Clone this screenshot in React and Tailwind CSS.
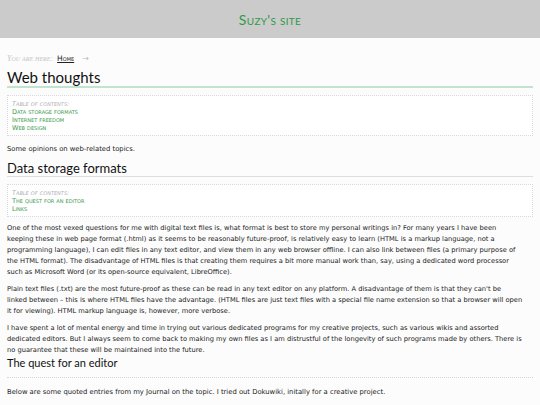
import React from 'react';

// Table of contents box
const Toc = ({ items }) => (
  <div className="border border-dotted border-[#d8d8d8] bg-white px-[4px] pt-[4px] pb-[3px] leading-[8px] text-[6.5px] [font-variant:small-caps]">
    <div className="italic text-[#b0b0b0]">Table of contents:</div>
    {items.map((item) => (
      <div key={item} className="text-[#3a9a4e]">{item}</div>
    ))}
  </div>
);

export default function App() {
  return (
    <div className="min-h-[405px] bg-[#fcfcfc] font-['DejaVu_Sans',sans-serif] text-[#222]">
      <div className="h-[38px] bg-[#cbcbcb] flex items-center justify-center">
        <h1 className="font-['Lato',sans-serif] text-[14px] text-[#2e9a48] [font-variant:small-caps] tracking-[0.3px]">Suzy's site</h1>
      </div>

      <div className="px-[7px]">
        <div className="mt-[17px] flex items-center gap-[4px] leading-[8px] [font-variant:small-caps]">
          <span className="italic text-[#c4c4c4] font-['Liberation_Serif',serif] text-[8px]">You are here:</span>
          <span className="text-[#222] underline text-[7.5px]">Home</span>
          <span className="text-[#bbb] text-[8px] ml-[4px]">→</span>
        </div>

        <h2 className="mt-[5px] font-['Lato',sans-serif] text-[15px] leading-[18px] text-[#111] border-b-2 border-[#c3e3cc]">Web thoughts</h2>

        <div className="mt-[7px]">
          <Toc items={['Data storage formats', 'Internet freedom', 'Web design']} />
        </div>

        <p className="mt-[8px] text-[6.8px] leading-[11px]">Some opinions on web-related topics.</p>

        <h3 className="mt-[6px] font-['Lato',sans-serif] text-[13px] leading-[14px] text-[#111] border-b border-[#dedede] pb-[1px]">Data storage formats</h3>

        <div className="mt-[7px]">
          <Toc items={['The quest for an editor', 'Links']} />
        </div>

        <div className="mt-[6px] text-[6.7px] leading-[11px] text-[#222] whitespace-nowrap flex flex-col gap-[6px]">
          <p>
            One of the most vexed questions for me with digital text files is, what format is best to store my personal writings in? For many years I have been<br />
            keeping these in web page format (.html) as it seems to be reasonably future-proof, is relatively easy to learn (HTML is a markup language, not a<br />
            programming language), I can edit files in any text editor, and view them in any web browser offline. I can also link between files (a primary purpose of<br />
            the HTML format). The disadvantage of HTML files is that creating them requires a bit more manual work than, say, using a dedicated word processor<br />
            such as Microsoft Word (or its open-source equivalent, LibreOffice).
          </p>
          <p>
            Plain text files (.txt) are the most future-proof as these can be read in any text editor on any platform. A disadvantage of them is that they can't be<br />
            linked between – this is where HTML files have the advantage. (HTML files are just text files with a special file name extension so that a browser will open<br />
            it for viewing). HTML markup language is, however, more verbose.
          </p>
          <p>
            I have spent a lot of mental energy and time in trying out various dedicated programs for my creative projects, such as various wikis and assorted<br />
            dedicated editors. But I always seem to come back to making my own files as I am distrustful of the longevity of such programs made by others. There is<br />
            no guarantee that these will be maintained into the future.
          </p>
        </div>

        <h4 className="font-['Lato',sans-serif] text-[11px] leading-[14px] text-[#111] border-b border-dotted border-[#d6d6d6] pb-[7px]">The quest for an editor</h4>

        <p className="mt-[9px] text-[6.8px] leading-[11px]">Below are some quoted entries from my Journal on the topic. I tried out Dokuwiki, initally for a creative project.</p>
      </div>
    </div>
  );
}
